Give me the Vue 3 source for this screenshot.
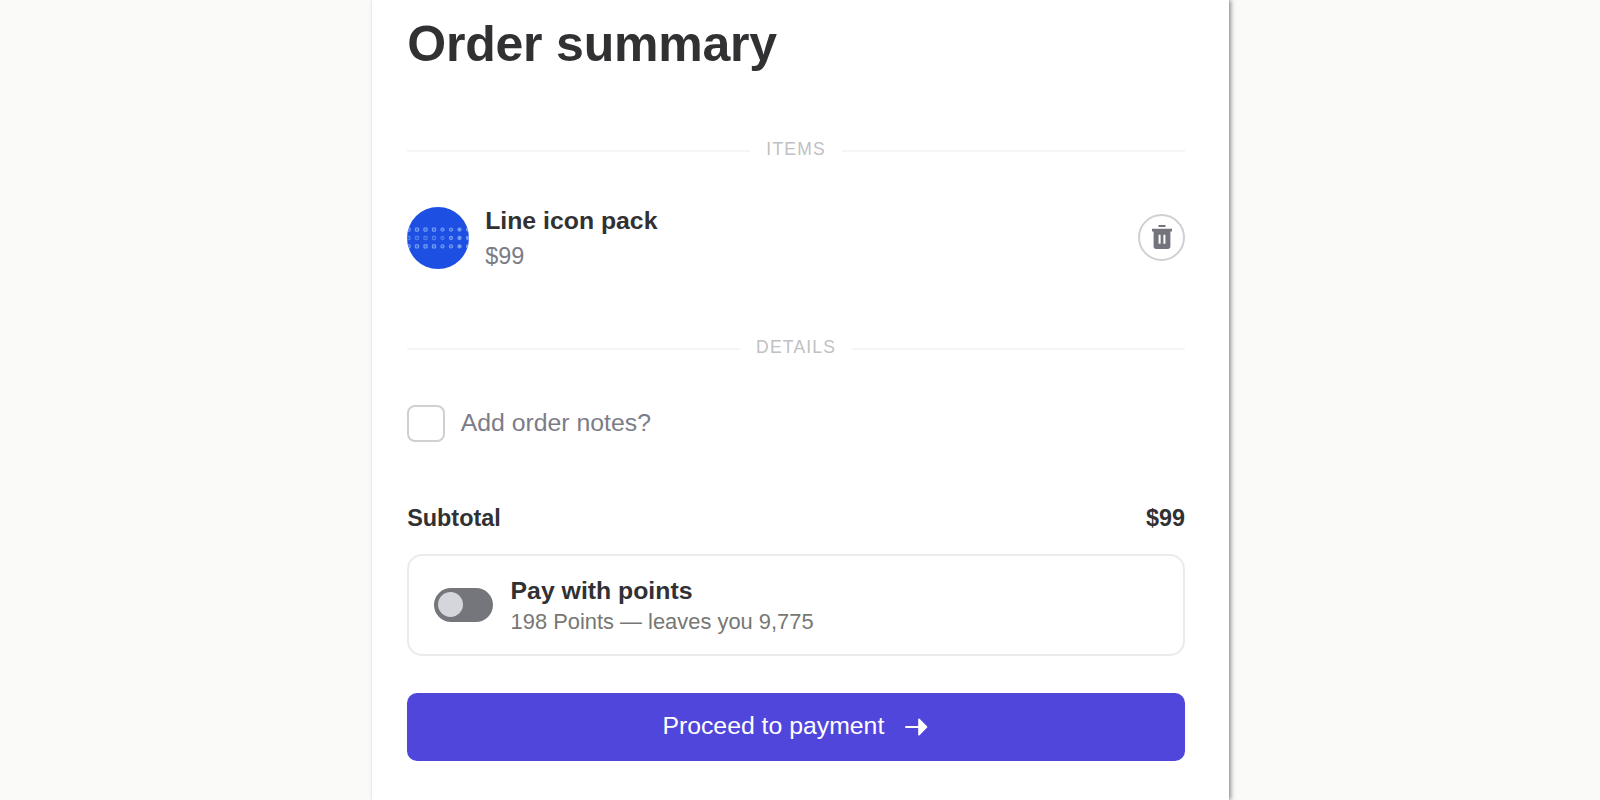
<script setup>
import { computed, ref } from "vue";

const items = ref([{ id: 1, name: "Line icon pack", price: 99 }]);
const addNotes = ref(false);
const payWithPoints = ref(false);

const balance = 9973;
const subtotal = computed(() => items.value.reduce((sum, item) => sum + item.price, 0));
const points = computed(() => subtotal.value * 2);
const remaining = computed(() => (balance - points.value).toLocaleString("en-US"));

function removeItem(id) {
  items.value = items.value.filter((item) => item.id !== id);
}
</script>

<template>
  <main class="page">
    <section class="panel">
      <h1>Order summary</h1>

      <div class="divider items-divider"><span>ITEMS</span></div>

      <div v-for="item in items" :key="item.id" class="item">
        <svg class="thumb" viewBox="0 0 62 62">
          <defs>
            <clipPath id="thumb-clip"><circle cx="31" cy="31" r="31" /></clipPath>
          </defs>
          <circle cx="31" cy="31" r="31" fill="#1d4fe3" />
          <g clip-path="url(#thumb-clip)" fill="#86adf5" stroke="#86adf5" stroke-width="1.1">
            <template v-for="row in 3" :key="row">
              <rect
                v-for="col in 8"
                :key="col"
                :x="col * 8.5 - 8.6"
                :y="row * 8.4 + 12.6"
                width="3.2"
                height="3.2"
                :rx="col > 4 ? 1.6 : 0.6"
                :fill-opacity="col > 6 ? 1 : 0.35"
                :opacity="row === 2 && col < 6 ? 0.5 : 0.85"
              />
            </template>
          </g>
        </svg>
        <div class="item-text">
          <p class="name">{{ item.name }}</p>
          <p class="price">${{ item.price }}</p>
        </div>
        <button class="remove" aria-label="Remove" @click="removeItem(item.id)">
          <svg viewBox="0 0 22 24">
            <path
              fill="#74747f"
              fill-rule="evenodd"
              d="M7.5 0h7v1.9h-7zM1 3.8h20v2.6h-1.6v14.9a2.6 2.6 0 0 1-2.6 2.6H5.2a2.6 2.6 0 0 1-2.6-2.6V6.4H1zM7.6 9.8v9h2v-9zM12.4 9.8v9h2v-9z"
            />
          </svg>
        </button>
      </div>

      <div class="divider details-divider"><span>DETAILS</span></div>

      <label class="notes">
        <input v-model="addNotes" type="checkbox" />
        <span>Add order notes?</span>
      </label>

      <div class="subtotal">
        <span>Subtotal</span>
        <span>${{ subtotal }}</span>
      </div>

      <div class="points">
        <button
          class="toggle"
          :class="{ on: payWithPoints }"
          role="switch"
          aria-label="Pay with points"
          :aria-checked="payWithPoints"
          @click="payWithPoints = !payWithPoints"
        >
          <span class="knob"></span>
        </button>
        <div class="points-text">
          <p class="points-title">Pay with points</p>
          <p class="points-info">{{ points }} Points — leaves you {{ remaining }}</p>
        </div>
      </div>

      <button class="proceed">
        <span>Proceed to payment</span>
        <svg viewBox="0 0 23 18">
          <path d="M1 9h14" fill="none" stroke="#fff" stroke-width="2" stroke-linecap="round" />
          <path
            d="M14 1.2L21.6 9L14 16.8z"
            fill="#fff"
            stroke="#fff"
            stroke-width="1.6"
            stroke-linejoin="round"
          />
        </svg>
      </button>
    </section>
  </main>
</template>

<style>
body {
  background: #fafaf8;
}
</style>

<style scoped>
.page {
  height: 800px;
  overflow: hidden;
  font-family: "Liberation Sans", Arial, sans-serif;
  color: #313134;
}

.panel {
  display: flex;
  flex-direction: column;
  box-sizing: border-box;
  width: 857px;
  height: 800px;
  margin-left: 372px;
  padding: 13.6px 44px 0 35.2px;
  background: #fff;
  box-shadow: 1.5px 0 5px rgba(0, 0, 0, 0.5);
}

h1,
p {
  margin: 0;
}

h1 {
  font-size: 50px;
  line-height: 60px;
  letter-spacing: -0.2px;
}

button {
  padding: 0;
  border: none;
  font: inherit;
  cursor: pointer;
}

.divider {
  display: flex;
  align-items: center;
  gap: 16px;
  height: 20px;
  color: #bfc0c3;
  font-size: 17.5px;
  line-height: 20px;
  letter-spacing: 1.2px;
}

.divider span {
  padding-bottom: 1px;
}

.divider::before,
.divider::after {
  content: "";
  flex: 1;
  height: 2px;
  margin-top: 2px;
  background: #f5f5f6;
}

.items-divider {
  margin-top: 66.4px;
}

.item {
  display: flex;
  align-items: center;
  height: 68px;
  margin-top: 44px;
}

.thumb {
  width: 62px;
  height: 62px;
  margin-right: 16px;
}

.item-text {
  flex: 1;
  line-height: 34px;
}

.name {
  font-size: 24.8px;
  font-weight: bold;
}

.price {
  padding-top: 1px;
  margin-bottom: -1px;
  color: #7c7c85;
  font-size: 23.4px;
}

.remove {
  display: flex;
  align-items: center;
  justify-content: center;
  box-sizing: border-box;
  width: 47px;
  height: 47px;
  margin-bottom: 1px;
  border: 2px solid #d0d0d2;
  border-radius: 50%;
  background: #fff;
}

.remove svg {
  width: 22px;
  height: 24px;
}

.details-divider {
  margin-top: 65.6px;
}

.notes {
  display: flex;
  align-items: center;
  gap: 16px;
  margin-top: 47px;
  color: #7c7c88;
  font-size: 24.8px;
  line-height: 36px;
}

.notes span {
  padding-bottom: 2px;
}

.notes input {
  appearance: none;
  box-sizing: border-box;
  width: 37.5px;
  height: 37.5px;
  margin: 0;
  border: 2px solid #d0d0d2;
  border-radius: 8px;
}

.notes input:checked {
  background: #5146dc;
}

.subtotal {
  display: flex;
  justify-content: space-between;
  margin-top: 60px;
  font-size: 23.4px;
  font-weight: bold;
  line-height: 30px;
}

.points {
  display: flex;
  align-items: center;
  gap: 18px;
  box-sizing: border-box;
  height: 102.6px;
  margin-top: 21px;
  padding-left: 24.4px;
  border: 2px solid #ebebec;
  border-radius: 15px;
}

.toggle {
  display: flex;
  align-items: center;
  box-sizing: border-box;
  width: 59px;
  height: 34px;
  padding: 0 4.5px;
  border-radius: 17px;
  background: #75757c;
}

.toggle.on {
  justify-content: flex-end;
  background: #5146dc;
}

.knob {
  width: 25px;
  height: 25px;
  border-radius: 50%;
  background: #d5d5dc;
}

.points-text {
  padding-top: 1.6px;
}

.points-title {
  font-size: 24.8px;
  font-weight: bold;
  line-height: 31px;
}

.points-info {
  color: #777773;
  font-size: 21.9px;
  line-height: 31px;
}

.proceed {
  display: flex;
  align-items: center;
  justify-content: center;
  gap: 20.5px;
  height: 68px;
  margin-top: 36.6px;
  padding-right: 2px;
  border-radius: 10px;
  background: #5146dc;
  color: #fff;
  font-size: 24.8px;
}

.proceed span {
  padding-bottom: 1px;
}

.proceed svg {
  width: 23px;
  height: 18px;
}
</style>
